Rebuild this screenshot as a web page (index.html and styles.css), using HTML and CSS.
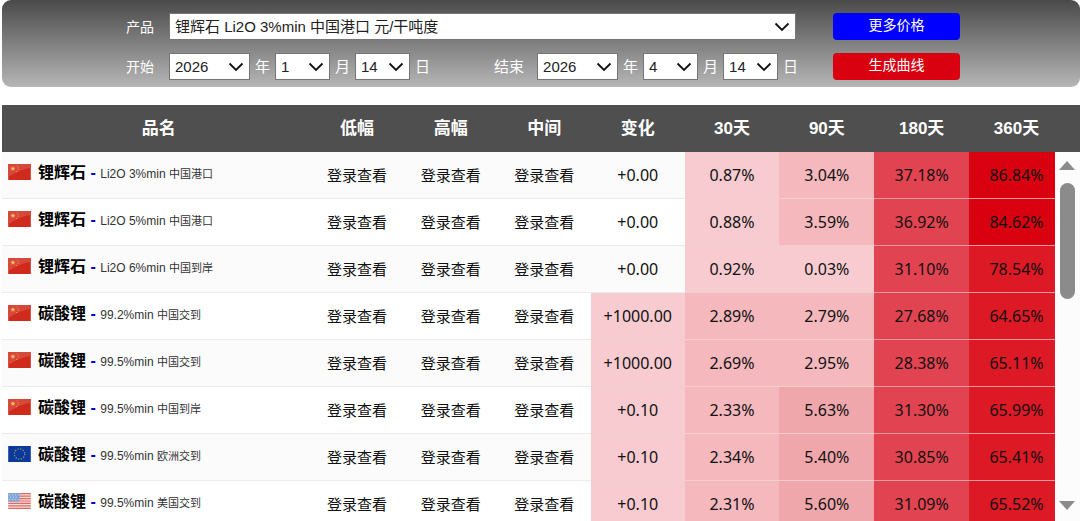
FILE: index.html
```
<!DOCTYPE html>
<html lang="zh-CN">
<head>
<meta charset="utf-8">
<title>锂价格</title>
<link rel="stylesheet" href="styles.css">
</head>
<body>
<svg class="defs" aria-hidden="true">
  <symbol id="chevron" viewBox="0 0 16 10"><path d="M1.5 1.5 8 8l6.500-6.500" fill="none" stroke="#111" stroke-width="1.800"/></symbol>
  <symbol id="cn" viewBox="0 0 24 17">
    <rect width="24" height="17" fill="#cf2a1c"/>
    <path d="M0 0h24v4Q12 6 0 14z" fill="#d6493a"/>
    <path d="m5 2 .8 2h2L6.200 5.300l.6 2L5 6.100 3.200 7.300l.6-2L2.200 4h2z" fill="#f6bd62"/>
    <path d="M9 1.500h1v1H9zM10 3.500h1v1h-1zM10 5.500h1v1h-1zM8.500 7.500h1v1h-1z" fill="#f0a45a"/>
  </symbol>
  <symbol id="eu" viewBox="0 0 24 17">
    <rect width="24" height="17" fill="#0c3a9c"/>
    <circle cx="12" cy="8.500" r="5.500" fill="none" stroke="#8a9a63" stroke-width="1.300" stroke-dasharray="1.300 1.580"/>
  </symbol>
  <symbol id="us" viewBox="0 0 24 17">
    <rect width="24" height="17" fill="#f5dedb"/>
    <path d="M0 .7h24M0 3.300h24M0 5.900h24M0 8.500h24M0 11.100h24M0 13.700h24M0 16.300h24" stroke="#dc6b66" stroke-width="1.300"/>
    <rect width="12" height="9" fill="#7fa5d6"/>
    <path d="M1 2h10M2 4.500h9M1 7h10" stroke="#dce8f6" stroke-width="1" stroke-dasharray="1 2"/>
  </symbol>
</svg>

<form class="filter">
  <label class="caption" for="product">产品</label>
  <span class="pick pick-product"><select id="product"><option>锂辉石 Li2O 3%min 中国港口 元/干吨度</option></select><svg><use href="#chevron"/></svg></span>
  <button class="btn btn-more" type="button">更多价格</button>

  <label class="caption" for="start-year">开始</label>
  <div class="dates">
    <span class="pick pick-year"><select id="start-year"><option>2026</option></select><svg><use href="#chevron"/></svg></span>
    <label for="start-year">年</label>
    <span class="pick pick-part"><select id="start-month"><option>1</option></select><svg><use href="#chevron"/></svg></span>
    <label for="start-month">月</label>
    <span class="pick pick-part"><select id="start-day"><option>14</option></select><svg><use href="#chevron"/></svg></span>
    <label for="start-day">日</label>
    <label class="end" for="end-year">结束</label>
    <span class="pick pick-year"><select id="end-year"><option>2026</option></select><svg><use href="#chevron"/></svg></span>
    <label for="end-year">年</label>
    <span class="pick pick-part"><select id="end-month"><option>4</option></select><svg><use href="#chevron"/></svg></span>
    <label for="end-month">月</label>
    <span class="pick pick-part"><select id="end-day"><option>14</option></select><svg><use href="#chevron"/></svg></span>
    <label for="end-day">日</label>
  </div>
  <button class="btn btn-draw" type="button">生成曲线</button>
</form>

<section class="prices">
  <table>
    <colgroup><col class="c-name"><col class="c-val"><col class="c-val"><col class="c-val"><col class="c-val"><col class="c-pct"><col class="c-pct"><col class="c-pct"><col class="c-pct"><col></colgroup>
    <thead><tr><th class="name-head">品名</th><th>低幅</th><th>高幅</th><th>中间</th><th>变化</th><th>30天</th><th>90天</th><th>180天</th><th>360天</th><td></td></tr></thead>
    <tbody>
      <tr><td class="name"><svg class="flag"><use href="#cn"/></svg><b>锂辉石</b> <i>-</i> <small>Li2O 3%min <span>中国港口</span></small></td><td class="locked">登录查看</td><td class="locked">登录查看</td><td class="locked">登录查看</td><td>+0.00</td><td class="h1">0.87%</td><td class="h2">3.04%</td><td class="h4">37.18%</td><td class="h6">86.84%</td><td></td></tr>
      <tr><td class="name"><svg class="flag"><use href="#cn"/></svg><b>锂辉石</b> <i>-</i> <small>Li2O 5%min <span>中国港口</span></small></td><td class="locked">登录查看</td><td class="locked">登录查看</td><td class="locked">登录查看</td><td>+0.00</td><td class="h1">0.88%</td><td class="h2">3.59%</td><td class="h4">36.92%</td><td class="h6">84.62%</td><td></td></tr>
      <tr><td class="name"><svg class="flag"><use href="#cn"/></svg><b>锂辉石</b> <i>-</i> <small>Li2O 6%min <span>中国到岸</span></small></td><td class="locked">登录查看</td><td class="locked">登录查看</td><td class="locked">登录查看</td><td>+0.00</td><td class="h1">0.92%</td><td class="h1">0.03%</td><td class="h4">31.10%</td><td class="h5">78.54%</td><td></td></tr>
      <tr><td class="name"><svg class="flag"><use href="#cn"/></svg><b>碳酸锂</b> <i>-</i> <small>99.2%min <span>中国交到</span></small></td><td class="locked">登录查看</td><td class="locked">登录查看</td><td class="locked">登录查看</td><td class="h1">+1000.00</td><td class="h2">2.89%</td><td class="h2">2.79%</td><td class="h4">27.68%</td><td class="h5">64.65%</td><td></td></tr>
      <tr><td class="name"><svg class="flag"><use href="#cn"/></svg><b>碳酸锂</b> <i>-</i> <small>99.5%min <span>中国交到</span></small></td><td class="locked">登录查看</td><td class="locked">登录查看</td><td class="locked">登录查看</td><td class="h1">+1000.00</td><td class="h2">2.69%</td><td class="h2">2.95%</td><td class="h4">28.38%</td><td class="h5">65.11%</td><td></td></tr>
      <tr><td class="name"><svg class="flag"><use href="#cn"/></svg><b>碳酸锂</b> <i>-</i> <small>99.5%min <span>中国到岸</span></small></td><td class="locked">登录查看</td><td class="locked">登录查看</td><td class="locked">登录查看</td><td class="h1">+0.10</td><td class="h2">2.33%</td><td class="h3">5.63%</td><td class="h4">31.30%</td><td class="h5">65.99%</td><td></td></tr>
      <tr><td class="name"><svg class="flag"><use href="#eu"/></svg><b>碳酸锂</b> <i>-</i> <small>99.5%min <span>欧洲交到</span></small></td><td class="locked">登录查看</td><td class="locked">登录查看</td><td class="locked">登录查看</td><td class="h1">+0.10</td><td class="h2">2.34%</td><td class="h3">5.40%</td><td class="h4">30.85%</td><td class="h5">65.41%</td><td></td></tr>
      <tr><td class="name"><svg class="flag"><use href="#us"/></svg><b>碳酸锂</b> <i>-</i> <small>99.5%min <span>美国交到</span></small></td><td class="locked">登录查看</td><td class="locked">登录查看</td><td class="locked">登录查看</td><td class="h1">+0.10</td><td class="h2">2.31%</td><td class="h3">5.60%</td><td class="h4">31.09%</td><td class="h5">65.52%</td><td></td></tr>
    </tbody>
  </table>
  <div class="scrollbar" aria-hidden="true">
    <svg class="arrow" viewBox="0 0 16 9"><path d="M0 9 8 0l8 9z"/></svg>
    <div class="track"><div class="thumb"></div></div>
    <svg class="arrow" viewBox="0 0 16 9"><path d="M0 0h16L8 9z"/></svg>
  </div>
</section>
</body>
</html>
```
FILE: styles.css
```
* {
  box-sizing: border-box;
}

body {
  margin: 0;
  padding-left: 2px;
  height: 100vh;
  overflow: hidden;
  display: flex;
  flex-direction: column;
  gap: 18px;
  background: #fff;
  color: #111;
  font: 15px/20px "Liberation Sans", "Noto Sans CJK SC", sans-serif;
}

.defs {
  display: none;
}

.filter {
  display: grid;
  grid-template-columns: 30px minmax(0, 627px) 127px;
  column-gap: 13px;
  row-gap: 13px;
  align-items: center;
  padding: 13px 0 7px 124px;
  border-radius: 9px;
  background: linear-gradient(#4a4a4a, #b6b6b6);
  color: #fff;
}

.caption {
  font-size: 14px;
}

.pick {
  position: relative;
  display: block;
}

.pick select {
  display: block;
  width: 100%;
  height: 27px;
  padding: 0 5px;
  border: 1px solid #767676;
  border-radius: 0;
  appearance: none;
  background: #fff;
  color: #222;
  font: inherit;
}

.pick svg {
  position: absolute;
  right: 6px;
  top: 9px;
  width: 16px;
  height: 10px;
  pointer-events: none;
}

.pick-year {
  flex: 0 0 81px;
}

.pick-part {
  flex: 0 0 55px;
}

.dates {
  display: flex;
  align-items: center;
  gap: 5px;
  white-space: nowrap;
}

.end {
  margin: 0 8px 0 59px;
}

.btn {
  height: 27px;
  margin-left: 24px;
  width: 127px;
  padding: 0 0 3px;
  border: 0;
  border-radius: 4px;
  color: #fff;
  font: inherit;
  font-size: 14px;
}

.btn-more {
  background: #00f;
}

.btn-draw {
  background: #d9000f;
}

.prices {
  position: relative;
  flex: 1;
  min-height: 0;
  overflow: hidden;
}

table {
  width: 100%;
  table-layout: fixed;
  border-spacing: 0;
}

.c-name {
  width: 28.6%;
}

.c-val {
  width: 8.68%;
}

.c-pct {
  width: 8.8%;
}

thead {
  background: #4f4f4f;
  color: #fff;
}

th {
  height: 47px;
  padding: 0;
  font-size: 17px;
}

.name-head {
  padding-left: 5px;
}

thead td {
  padding: 0;
}

tbody td {
  height: 47px;
  padding: 0;
  border-bottom: 1px solid #ebebeb;
  text-align: center;
  font-family: "Noto Sans", "Noto Sans CJK SC", sans-serif;
  font-size: 16px;
}

tbody .locked {
  font-size: 15px;
}

tbody tr:nth-child(odd) {
  background: #fbfbfb;
}

tbody .name {
  padding: 0 0 4px 6px;
  text-align: left;
  white-space: nowrap;
  font-family: "Liberation Sans", "Noto Sans CJK SC", sans-serif;
}

.flag {
  width: 23px;
  height: 16px;
  margin-right: 7px;
  vertical-align: -2px;
}

.name b {
  color: #000;
}

.name i {
  color: #00c;
  font-style: normal;
  font-weight: bold;
}

.name small {
  color: #333;
  font-size: 12px;
}

.name span {
  font-size: 11px;
}

tbody .h1,
tbody .h2,
tbody .h3 {
  border-color: #efcdd0;
}

tbody .h4,
tbody .h5,
tbody .h6 {
  border-color: #f09aa0;
}

.h1 {
  background: #f7cbd0;
}

.h2 {
  background: #f4b8bd;
}

.h3 {
  background: #f0a7ab;
}

.h4 {
  background: #e14450;
}

.h5 {
  background: #dc1925;
}

.h6 {
  background: #d9000f;
}

.scrollbar {
  position: absolute;
  top: 47px;
  right: 0;
  bottom: 0;
  width: 25px;
  padding: 9px 5px 11px 4px;
  display: flex;
  flex-direction: column;
  gap: 13px;
  align-items: center;
  background: #fcfcfc;
}

.arrow {
  flex: none;
  width: 16px;
  height: 9px;
  fill: #8b8b8b;
}

.track {
  flex: 1;
  width: 15px;
}

.thumb {
  height: 38%;
  border-radius: 8px;
  background: #8b8b8b;
}
```
